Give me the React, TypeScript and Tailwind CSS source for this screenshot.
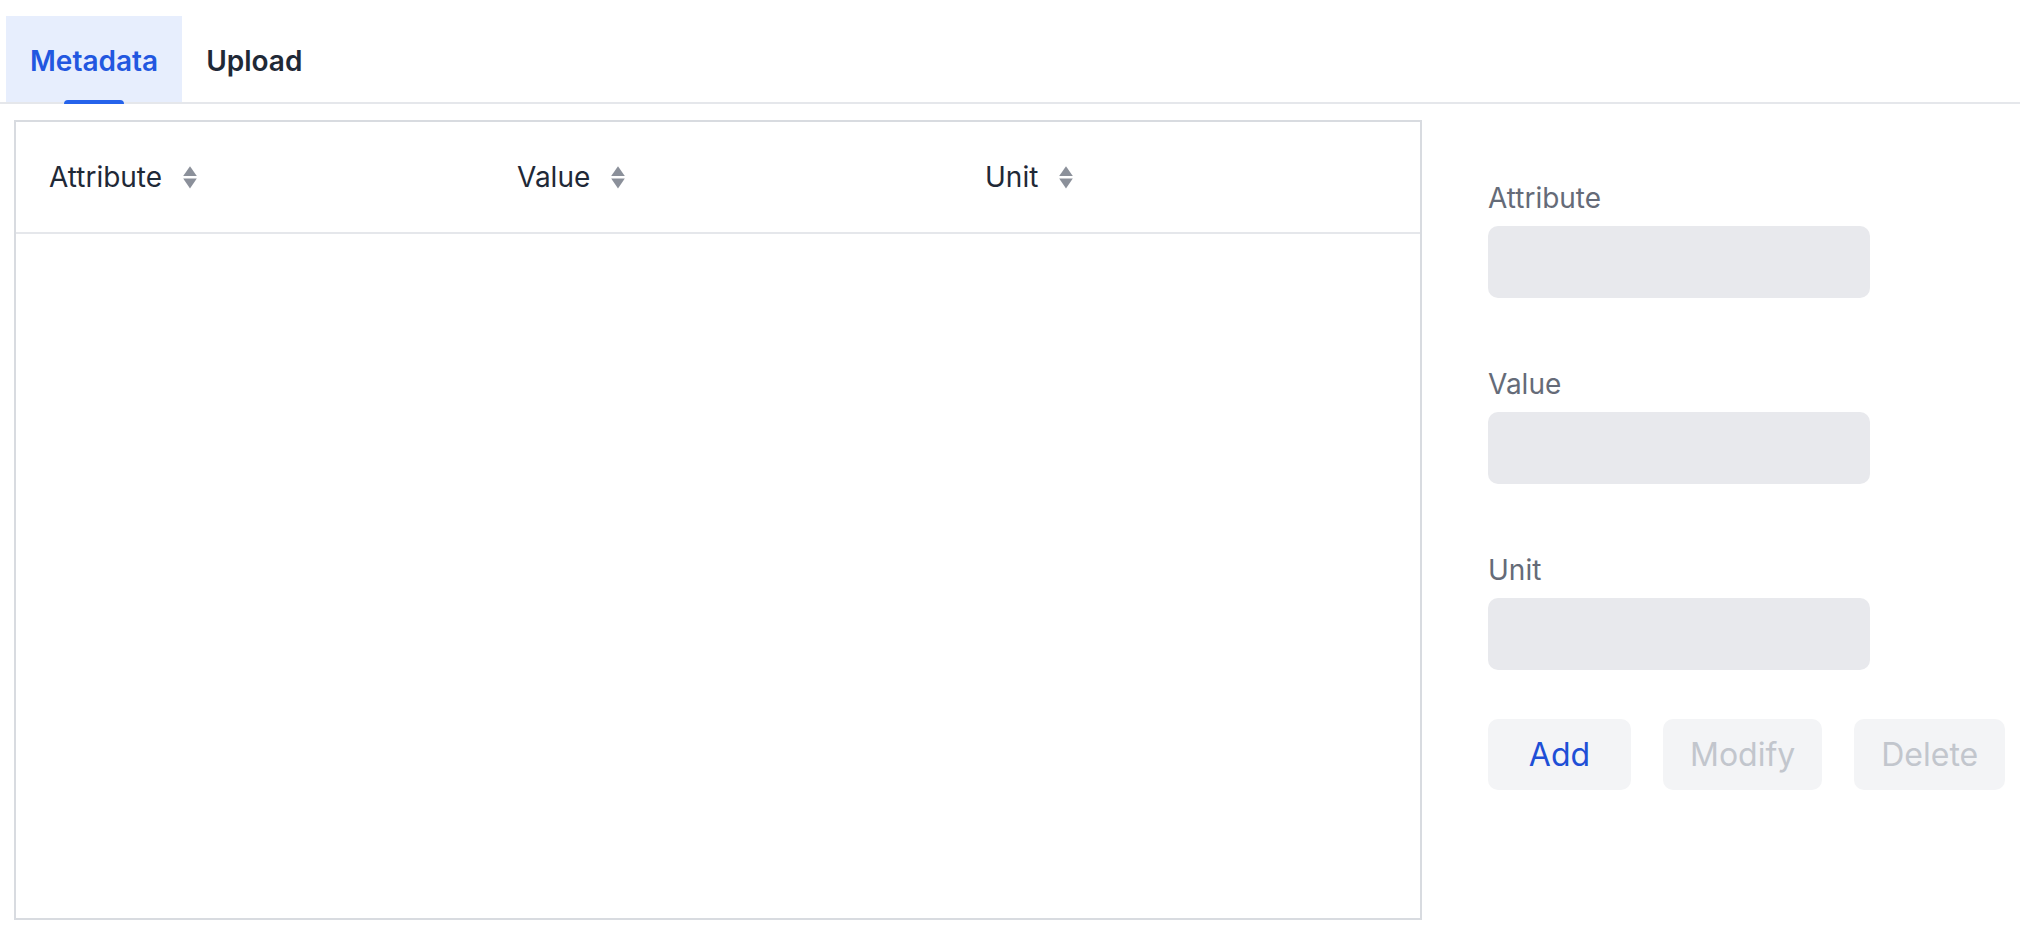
import { useState } from 'react';

const columns = ['Attribute', 'Value', 'Unit'];
const fields = ['Attribute', 'Value', 'Unit'];

function SortIcon() {
  return (
    <svg
      width="14"
      height="23"
      viewBox="0 0 14 23"
      className="ml-[21px] shrink-0"
      fill="#8b909a"
    >
      <path d="M7 0.2 L13.8 10 L0.2 10 Z" strokeLinejoin="round" />
      <path d="M0.2 12.6 L13.8 12.6 L7 22.4 Z" strokeLinejoin="round" />
    </svg>
  );
}

function Tabs(props: { active: string; onChange: (t: string) => void }) {
  const tabs = ['Metadata', 'Upload'];
  return (
    <div className="flex border-b-2 border-[#e5e7eb] pl-[6px] pt-[16px]">
      {tabs.map((tab) => {
        const isActive = tab === props.active;
        return (
          <button
            key={tab}
            onClick={() => props.onChange(tab)}
            className={
              isActive
                ? 'relative flex h-[86px] items-center bg-[#e7eefd] px-[24px] pt-[3px] text-[28px] font-semibold text-[#2257e0]'
                : 'relative flex h-[86px] items-center px-[24px] pt-[3px] text-[28px] font-semibold text-[#1f2937]'
            }
          >
            {tab}
            {isActive ? (
              <span className="absolute bottom-[-2px] left-[58px] h-[4px] w-[60px] rounded-t-[4px] bg-[#2563eb]" />
            ) : null}
          </button>
        );
      })}
    </div>
  );
}

function MetadataTable() {
  return (
    <div className="flex h-[800px] w-[1408px] shrink-0 flex-col border-2 border-[#d8dbe0]">
      <div className="grid h-[112px] grid-cols-3 border-b-2 border-[#e5e7eb]">
        {columns.map((col) => (
          <div key={col} className="flex items-center pl-[33px]">
            <span className="text-[28px] leading-[40px] text-[#1f2937]">{col}</span>
            <SortIcon />
          </div>
        ))}
      </div>
      <div className="flex-1" />
    </div>
  );
}

function EditorPanel() {
  return (
    <div className="ml-[66px] flex flex-col pt-[58px]">
      {fields.map((field, i) => (
        <div key={field} className={i > 0 ? 'mt-[66px] flex flex-col' : 'flex flex-col'}>
          <label className="text-[28px] leading-[40px] text-[#656b78]">{field}</label>
          <div className="mt-[8px] h-[72px] w-[382px] rounded-[10px] bg-[#e8e9ed]" />
        </div>
      ))}
      <div className="mt-[49px] flex gap-[32px]">
        <button className="h-[71px] w-[143px] rounded-[10px] bg-[#f3f4f6] text-[32px] text-[#1e4fd6]">
          Add
        </button>
        <button className="h-[71px] rounded-[10px] bg-[#f3f4f6] px-[27px] text-[32px] text-[#c2c6cd]">
          Modify
        </button>
        <button className="h-[71px] rounded-[10px] bg-[#f3f4f6] px-[27px] text-[32px] text-[#c2c6cd]">
          Delete
        </button>
      </div>
    </div>
  );
}

export default function App() {
  const [tab, setTab] = useState('Metadata');
  return (
    <div className="h-[930px] w-[2020px] overflow-hidden bg-white font-['Inter',sans-serif]">
      <Tabs active={tab} onChange={setTab} />
      <div className="flex pl-[14px] pt-[16px]">
        <MetadataTable />
        <EditorPanel />
      </div>
    </div>
  );
}
